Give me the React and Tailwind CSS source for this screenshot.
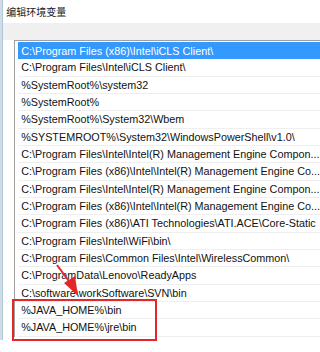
const paths = [
  "C:\\Program Files (x86)\\Intel\\iCLS Client\\",
  "C:\\Program Files\\Intel\\iCLS Client\\",
  "%SystemRoot%\\system32",
  "%SystemRoot%",
  "%SystemRoot%\\System32\\Wbem",
  "%SYSTEMROOT%\\System32\\WindowsPowerShell\\v1.0\\",
  "C:\\Program Files\\Intel\\Intel(R) Management Engine Compon...",
  "C:\\Program Files (x86)\\Intel\\Intel(R) Management Engine Co...",
  "C:\\Program Files\\Intel\\Intel(R) Management Engine Compon...",
  "C:\\Program Files (x86)\\Intel\\Intel(R) Management Engine Co...",
  "C:\\Program Files (x86)\\ATI Technologies\\ATI.ACE\\Core-Static",
  "C:\\Program Files\\Intel\\WiFi\\bin\\",
  "C:\\Program Files\\Common Files\\Intel\\WirelessCommon\\",
  "C:\\ProgramData\\Lenovo\\ReadyApps",
  "C:\\software\\workSoftware\\SVN\\bin",
  "%JAVA_HOME%\\bin",
  "%JAVA_HOME%\\jre\\bin",
];

export default function App() {
  return (
    <div className="relative w-[320px] h-[352px] bg-white overflow-hidden flex font-['Liberation_Sans',sans-serif]">
      {/* window behind, peeking at the left */}
      <div className="w-[6px] h-[340px] bg-[#cfdde8] border-r border-[#b3c6d4]" />

      <div className="flex-1 flex flex-col">
        <div className="h-[23px] pl-[3px] pt-[5px] text-[10px] leading-[14px] text-[#1a1a1a] font-['Noto_Sans_CJK_SC',sans-serif]">
          编辑环境变量
        </div>
        <div className="h-[17px] bg-[#f0f0f0]" />

        <div className="flex">
          <div className="w-[11px]" />
          <div className="flex-1 border-l border-t border-[#a0a0a0] pl-[3px] pt-px">
            {paths.map((p, i) => (
              <div
                key={i}
                className={
                  i === 0
                    ? "h-[17.33px] pl-[3px] flex items-center whitespace-nowrap overflow-hidden text-[10.8px] bg-[#3399ff] text-white"
                    : "h-[17.33px] pl-[3px] flex items-center whitespace-nowrap overflow-hidden text-[10.8px] text-[#111] border-b border-[#efefef]"
                }
              >
                {p}
              </div>
            ))}
          </div>
        </div>
      </div>

      {/* annotation overlay */}
      <div className="absolute left-[12px] top-[299px] w-[145px] h-[42px] border-2 border-[#e3262a]" />
      <svg className="absolute left-0 top-0" width="320" height="352" viewBox="0 0 320 352">
        <line x1="57" y1="265" x2="71" y2="284" stroke="#e3262a" strokeWidth="2" />
        <polygon points="78,296 64,283 75,276" fill="#e3262a" />
      </svg>
    </div>
  );
}
